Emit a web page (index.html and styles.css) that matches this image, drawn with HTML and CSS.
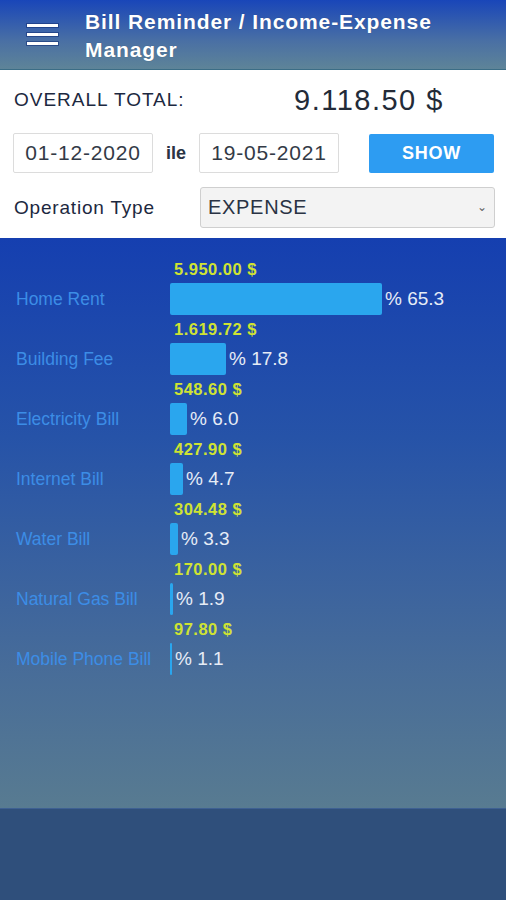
FILE: index.html
```html
<!DOCTYPE html>
<html lang="en">
<head>
    <meta charset="UTF-8">
    <meta name="viewport" content="width=device-width, initial-scale=1.0">
    <title>Bill Reminder</title>
    <link rel="stylesheet" href="styles.css">
</head>
<body>
    <header class="topbar">
        <div class="menu-btn">
            <span></span><span></span><span></span>
        </div>
        <div class="title">Bill Reminder / Income-Expense Manager</div>
    </header>

    <div class="filters">
        <div class="total-row">
            <div class="total-label">OVERALL TOTAL:</div>
            <div class="total-value">9.118.50 $</div>
        </div>
        <div class="date-row">
            <div class="date-box">01-12-2020</div>
            <div class="ile">ile</div>
            <div class="date-box">19-05-2021</div>
            <button class="show-btn">SHOW</button>
        </div>
        <div class="type-row">
            <div class="type-label">Operation Type</div>
            <div class="select-box">
                <span>EXPENSE</span>
                <span class="chevron">&#8964;</span>
            </div>
        </div>
    </div>

    <div class="chart">
        <div class="row">
            <div class="amount">5.950.00 $</div>
            <div class="name">Home Rent</div>
            <div class="bar-wrap"><div class="bar" style="width: 212px"></div><span class="pct">% 65.3</span></div>
        </div>
        <div class="row">
            <div class="amount">1.619.72 $</div>
            <div class="name">Building Fee</div>
            <div class="bar-wrap"><div class="bar" style="width: 56px"></div><span class="pct">% 17.8</span></div>
        </div>
        <div class="row">
            <div class="amount">548.60 $</div>
            <div class="name">Electricity Bill</div>
            <div class="bar-wrap"><div class="bar" style="width: 17px"></div><span class="pct">% 6.0</span></div>
        </div>
        <div class="row">
            <div class="amount">427.90 $</div>
            <div class="name">Internet Bill</div>
            <div class="bar-wrap"><div class="bar" style="width: 13px"></div><span class="pct">% 4.7</span></div>
        </div>
        <div class="row">
            <div class="amount">304.48 $</div>
            <div class="name">Water Bill</div>
            <div class="bar-wrap"><div class="bar" style="width: 8px"></div><span class="pct">% 3.3</span></div>
        </div>
        <div class="row">
            <div class="amount">170.00 $</div>
            <div class="name">Natural Gas Bill</div>
            <div class="bar-wrap"><div class="bar" style="width: 3px"></div><span class="pct">% 1.9</span></div>
        </div>
        <div class="row">
            <div class="amount">97.80 $</div>
            <div class="name">Mobile Phone Bill</div>
            <div class="bar-wrap"><div class="bar" style="width: 2px"></div><span class="pct">% 1.1</span></div>
        </div>
    </div>

    <footer class="bottom"></footer>
</body>
</html>
```

FILE: styles.css
```css
body {
    font-family: 'Liberation Sans', Arial, sans-serif;
    margin: 0;
    padding: 0;
    width: 506px;
    background: #2f4f7b;
}
.topbar {
    height: 69px;
    display: flex;
    align-items: center;
    background: linear-gradient(180deg, #1946b9, #4a70a4 60%, #5e8498);
    border-bottom: 1px solid #3b6d86;
    color: white;
}
.menu-btn {
    width: 31px;
    margin-left: 27px;
    margin-right: 27px;
    display: flex;
    flex-direction: column;
    gap: 6px;
}
.menu-btn span {
    height: 3px;
    background: white;
    box-shadow: 0 0 0 1px rgba(20, 50, 120, 0.6);
}
.title {
    font-size: 21px;
    font-weight: bold;
    letter-spacing: 0.9px;
    line-height: 28px;
    width: 400px;
    padding-top: 3px;
    text-shadow: 0 0 1px rgba(0, 0, 0, 0.3);
}
.filters {
    background: white;
    padding: 0 11px 0 13px;
    height: 168px;
}
.total-row {
    display: flex;
    align-items: center;
    height: 60px;
    padding-left: 1px;
}
.total-label {
    font-size: 19px;
    letter-spacing: 1px;
    color: #1c2840;
    width: 280px;
}
.total-value {
    font-size: 29px;
    letter-spacing: 1.5px;
    color: #232b38;
}
.date-row {
    display: flex;
    align-items: center;
    margin-top: 3px;
}
.date-box {
    width: 138px;
    height: 38px;
    border: 1px solid #dcdcdc;
    border-radius: 2px;
    font-size: 21px;
    letter-spacing: 0.8px;
    color: #333a46;
    display: flex;
    align-items: center;
    justify-content: center;
}
.ile {
    font-size: 18px;
    font-weight: bold;
    color: #2a3344;
    width: 46px;
    text-align: center;
}
.show-btn {
    margin-left: 30px;
    width: 125px;
    height: 39px;
    border: none;
    border-radius: 2px;
    background: #2d9cf2;
    color: white;
    font-family: inherit;
    font-size: 18px;
    font-weight: bold;
    letter-spacing: 0.8px;
}
.type-row {
    display: flex;
    align-items: center;
    margin-top: 14px;
}
.type-label {
    width: 186px;
    font-size: 19px;
    letter-spacing: 0.8px;
    color: #1c2840;
    padding-left: 1px;
}
.select-box {
    flex: 1;
    height: 39px;
    border: 1px solid #cfcfcf;
    border-radius: 3px;
    background: #f3f3f3;
    display: flex;
    align-items: center;
    justify-content: space-between;
    padding: 0 6px 0 7px;
    font-size: 20px;
    letter-spacing: 0.7px;
    color: #2a3344;
}
.chevron {
    font-size: 12px;
    color: #666;
    margin-top: -2px;
}
.chart {
    height: 553px;
    padding-top: 17px;
    background: linear-gradient(180deg, #153fb0, #2653a8 35%, #476c99 75%, #587b91);
}
.row {
    display: grid;
    grid-template-columns: 154px 1fr;
    grid-template-rows: 28px 32px;
    padding-left: 16px;
}
.amount {
    grid-column: 2;
    font-size: 16.5px;
    font-weight: bold;
    letter-spacing: 0.5px;
    color: #cfe333;
    padding-left: 4px;
    align-self: center;
}
.name {
    font-size: 17.5px;
    color: #3c8de6;
    align-self: center;
}
.bar-wrap {
    display: flex;
    align-items: center;
}
.bar {
    height: 32px;
    background: #2aa6ee;
    border-radius: 2px;
}
.pct {
    margin-left: 3px;
    font-size: 19px;
    color: #e6ecf6;
}
.bottom {
    height: 91px;
    background: #2f4f7b;
    border-top: 1px solid #3e6092;
}
```
